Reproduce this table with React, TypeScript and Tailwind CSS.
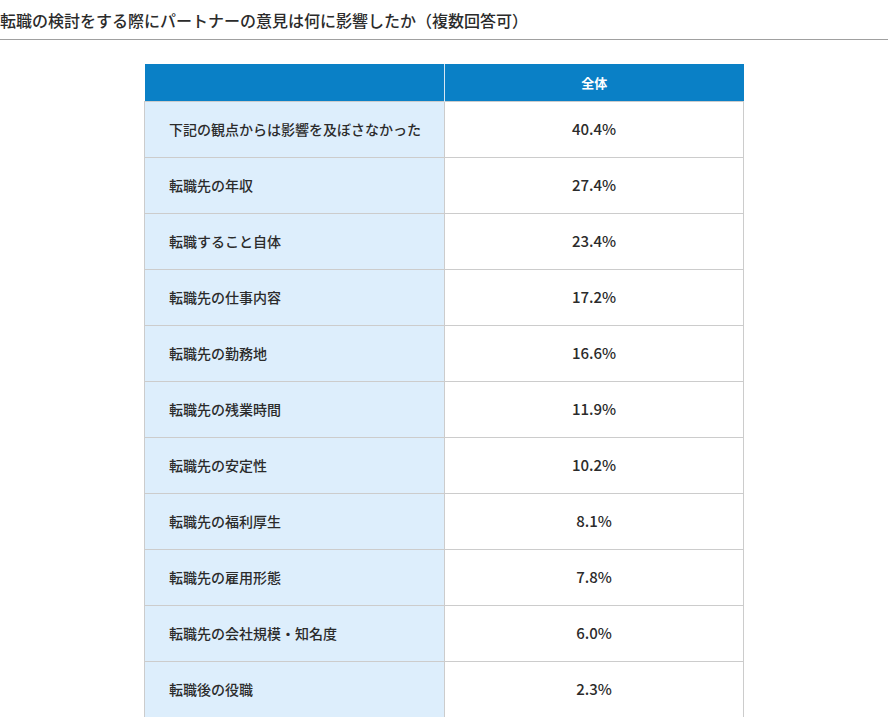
import React from 'react';

const rows: [string, string][] = [
  ['下記の観点からは影響を及ぼさなかった', '40.4%'],
  ['転職先の年収', '27.4%'],
  ['転職すること自体', '23.4%'],
  ['転職先の仕事内容', '17.2%'],
  ['転職先の勤務地', '16.6%'],
  ['転職先の残業時間', '11.9%'],
  ['転職先の安定性', '10.2%'],
  ['転職先の福利厚生', '8.1%'],
  ['転職先の雇用形態', '7.8%'],
  ['転職先の会社規模・知名度', '6.0%'],
  ['転職後の役職', '2.3%'],
];

export default function App() {
  return (
    <div
      className="w-[888px] h-[717px] overflow-hidden bg-white text-[#2b2b2b]"
      style={{ fontFamily: '"Noto Sans CJK JP", "Noto Sans", sans-serif' }}
    >
      <div className="h-[40px] border-b border-[#a0a0a0] flex items-center">
        <h2 className="text-[16px] font-medium leading-none">
          転職の検討をする際にパートナーの意見は何に影響したか（複数回答可）
        </h2>
      </div>
      <div className="pt-[24px] pl-[144px]">
        <table className="w-[600px] border-collapse table-fixed">
          <thead>
            <tr className="h-[37px] bg-[#0a80c6] text-white">
              <th className="w-[300px] border-r border-[#d6e6f3]"></th>
              <th className="text-[13px] font-bold">全体</th>
            </tr>
          </thead>
          <tbody>
            {rows.map(([label, value]) => (
              <tr key={label} className="h-[56px]">
                <td className="bg-[#ddeefc] border border-[#cccccc] pl-[24px] text-[14px] font-medium">
                  {label}
                </td>
                <td className="border border-[#cccccc] text-center text-[15px] font-medium">
                  {value}
                </td>
              </tr>
            ))}
          </tbody>
        </table>
      </div>
    </div>
  );
}
